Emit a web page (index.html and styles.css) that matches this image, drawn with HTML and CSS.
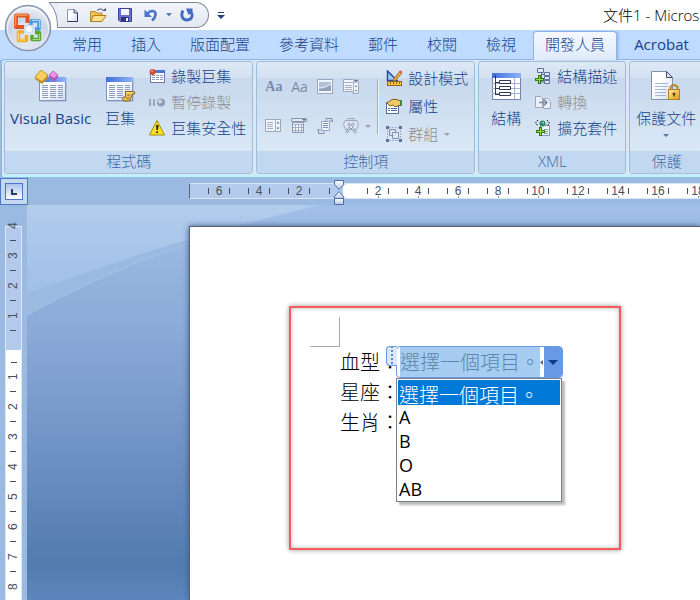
FILE: index.html
```html
<!DOCTYPE html>
<html lang="zh-Hant">
<head>
<meta charset="utf-8">
<title>文件1 - Microsoft Word</title>
<link rel="stylesheet" href="styles.css">
</head>
<body>
<svg class="defs" aria-hidden="true">
  <defs>
    <linearGradient id="gBlue" x1="0" y1="0" x2="1" y2="0"><stop offset="0" stop-color="#3f6fd8"/><stop offset="1" stop-color="#8fb4fa"/></linearGradient>
    <linearGradient id="gPaper" x1="0" y1="0" x2="1" y2="1"><stop offset="0.4" stop-color="#fff"/><stop offset="1" stop-color="#cfd9ee"/></linearGradient>
    <linearGradient id="gGold" x1="0" y1="0" x2="1" y2="1"><stop offset="0" stop-color="#fff0a0"/><stop offset="1" stop-color="#dc9a1c"/></linearGradient>
    <radialGradient id="gOrb" cx="0.5" cy="0.85" r="0.9"><stop offset="0" stop-color="#fff"/><stop offset="0.45" stop-color="#e6ebf3"/><stop offset="0.6" stop-color="#cbd6e6"/><stop offset="1" stop-color="#f4f7fb"/></radialGradient>
    <linearGradient id="gKnob" x1="0" y1="0" x2="0" y2="1"><stop offset="0" stop-color="#fff"/><stop offset="1" stop-color="#b4c8e8"/></linearGradient>
    <g id="sheet">
      <rect x="1" y="1" width="27" height="24" fill="#8797b8" opacity=".35"/>
      <rect x=".5" y=".5" width="26" height="23" fill="url(#gPaper)" stroke="#7f93be"/>
      <rect x="0" y="0" width="27" height="5" fill="url(#gBlue)"/>
      <path d="M3 8.500h6M3 10.500h6M3 12.500h6M3 14.500h6M3 16.500h6M3 18.500h6M3 20.500h6M11 8.500h6M11 10.500h6M11 12.500h6M11 14.500h6M11 16.500h6M11 18.500h6M11 20.500h6M19 8.500h5M19 10.500h5M19 12.500h5M19 14.500h5M19 16.500h5M19 18.500h5M19 20.500h5" stroke="#8c9cc0"/>
    </g>
    <g id="plus"><path d="M3 0h3v3h3v3H6v3H3V6H0V3h3z" fill="#2f7d12"/><path d="M4 1h1v3h3v1H5v3H4V5H1V4h3z" fill="#8fe04a"/></g>
  </defs>
</svg>

<header class="titlebar">
  <button class="office" aria-label="Office 按鈕">
    <svg width="48" height="48" viewBox="0 0 48 48">
      <circle cx="24" cy="24" r="22.500" fill="url(#gOrb)" stroke="#8794ad" stroke-width="1.500"/>
      <circle cx="24" cy="24" r="20.500" fill="none" stroke="#fff" stroke-opacity=".8"/>
      <path d="M3.500 25Q24 16 44.500 25A20.500 20.500 0 0 1 3.500 25z" fill="#c3d0e4" opacity=".5"/>
      <g fill="none" stroke-width="4" stroke-linejoin="round">
        <path d="M20 23H12V11.500H23.500V19" stroke="#e0561c"/>
        <path d="M27 21V17H35V25H31" stroke="#4a9be0" stroke-width="3.500"/>
        <path d="M20 28H14.500V36.500H22.500V31" stroke="#f3ae22" stroke-width="3.500"/>
        <path d="M28 31V35.500H35.500V28.500H31" stroke="#5aa832" stroke-width="3.500"/>
      </g>
      <path d="M11.500 22V11H24" fill="none" stroke="#f39a55" stroke-width="1.500"/>
      <path d="M28 16.500h7.500v7" fill="none" stroke="#a5d3f7"/>
      <path d="M14.500 29v7h7" fill="none" stroke="#fbd97a"/>
      <path d="M28.500 35.500h7v-6" fill="none" stroke="#a9d887"/>
      <circle cx="25" cy="25" r="3" fill="#fff" opacity=".75"/>
    </svg>
  </button>
  <svg class="hook" width="10" height="28" viewBox="0 0 10 28"><path d="M0 2.500C6 9 8.500 16 8.500 27.500H10V2.500z" fill="#e9eef6"/><path d="M0 2.500C6 9 8.500 16 8.500 27.500H10M0 2.500H10" fill="none" stroke="#7f8794"/></svg>
  <nav class="quick" aria-label="快速存取工具列">
    <button aria-label="新增"><svg width="14" height="16" viewBox="0 0 14 16"><path d="M2.500 2.500H9L12.500 6v8.500h-10z" fill="url(#gPaper)" stroke="#8b98b5"/><path d="M9 2.500L12.500 6v8.500h-10" fill="none" stroke="#2c3a58"/><path d="M9 2.500V6h3.500" fill="#dce5f5" stroke="#44506b"/></svg></button>
    <button aria-label="開啟"><svg width="18" height="16" viewBox="0 0 18 16"><path d="M1.500 14V4.500h5l1 1.500H13v8z" fill="#efc04c" stroke="#b98a2c"/><path d="M1.500 14.500l3-6H17l-4 6z" fill="#ffe08a" stroke="#b07a18"/><path d="M8 3.500Q12 0 15 4" fill="none" stroke="#44506b"/><path d="M13 4h4V1z" fill="#44506b"/></svg></button>
    <button aria-label="儲存"><svg width="16" height="16" viewBox="0 0 16 16"><path d="M1.500 1.500h13v13H3l-1.500-1.500z" fill="#6a70d0" stroke="#3c429c"/><rect x="4" y="2" width="8" height="6" fill="#f4f7ff"/><rect x="4" y="10" width="8" height="4" fill="#2e3480"/><rect x="9" y="11" width="2" height="3" fill="#fff"/></svg></button>
    <button aria-label="復原"><svg width="16" height="16" viewBox="0 0 16 16"><path d="M4.500 6.500C8 2.500 13 3.500 12.500 8 12.200 10.500 11 12 9 13.500" fill="none" stroke="#4a74cc" stroke-width="2.600"/><path d="M1.500 2.500v7.500h7.500z" fill="#4a74cc"/></svg></button>
    <button class="narrow" aria-label="復原選項"><svg width="6" height="4" viewBox="0 0 6 4"><path d="M0 0h6L3 3.500z" fill="#5d7fae"/></svg></button>
    <button aria-label="取消復原"><svg width="16" height="16" viewBox="0 0 16 16"><path d="M4 3.500C1.500 8 3 13 8 13S14.500 8 11.500 4.500" fill="none" stroke="#3f6bc6" stroke-width="2.800"/><path d="M13.500 1.500v3L9.500 8 7 1.500z" fill="#3f6bc6"/></svg></button>
  </nav>
  <button class="custom" aria-label="自訂快速存取工具列"><svg width="8" height="9" viewBox="0 0 8 9"><path d="M1 1.500h6" stroke="#25407c"/><path d="M0 4h8L4 8z" fill="#25407c"/></svg></button>
  <h1 class="doc-title">文件1 - Microsoft Word</h1>
</header>

<nav class="tabs">
  <a href="#home">常用</a>
  <a href="#insert">插入</a>
  <a href="#layout">版面配置</a>
  <a href="#references">參考資料</a>
  <a href="#mail">郵件</a>
  <a href="#review">校閱</a>
  <a href="#view">檢視</a>
  <a href="#developer" class="active">開發人員</a>
  <a href="#acrobat" class="latin">Acrobat</a>
</nav>

<section class="ribbon">
  <section class="group code">
    <div class="body">
      <button class="big"><svg width="32" height="32" viewBox="0 0 32 32"><use href="#sheet" x="4" y="7"/><path d="M0 7l6-7 7 5-6 8z" fill="#f7cf62" stroke="#c39131"/><path d="M0 7l7 4 6-6v3l-6 6-7-5z" fill="#c98f20"/><path d="M14 5l4-4 5 4-4 6z" fill="#ef8fe6" stroke="#c46ac4"/><path d="M14 5l5 3 4-3v2l-4 5-5-5z" fill="#b653b4"/></svg><span class="latin">Visual Basic</span></button>
      <button class="big"><svg width="32" height="32" viewBox="0 0 32 32"><use href="#sheet" x="2" y="7"/><path d="M21.500 21.500h8q2 0 1 2.500h-2l-2 4.500q0 2.500-2 2.500h-5q-2-2 0-4h2z" fill="url(#gGold)" stroke="#84601d"/><path d="M23 25h3M22 28h3" stroke="#84601d"/></svg><span>巨集</span></button>
      <div class="stack">
        <button class="small"><svg width="16" height="16" viewBox="0 0 16 16"><rect x="1.500" y="2.500" width="14" height="12" fill="#fff" stroke="#6a7ca3"/><rect x="1" y="2" width="15" height="3" fill="#4c76cf"/><path d="M3 7.500h3M7 7.500h3M11 7.500h3M3 9.500h3M7 9.500h3M11 9.500h3M3 11.500h3M7 11.500h3M11 11.500h3" stroke="#8c9cc0"/><circle cx="3.500" cy="4" r="3" fill="#e0492c"/><circle cx="3" cy="3" r="1" fill="#ffa088"/></svg><span>錄製巨集</span></button>
        <button class="small" disabled><svg width="16" height="16" viewBox="0 0 16 16"><path d="M1 5v7M5 5v7" stroke="#9aa6bd" stroke-width="2"/><circle cx="12" cy="8.500" r="4" fill="#8f9db8"/><circle cx="11" cy="7.500" r="2" fill="#cfd7e6"/></svg><span>暫停錄製</span></button>
        <button class="small"><svg width="16" height="16" viewBox="0 0 16 16"><path d="M8 .5L15.500 15H.5z" fill="#ffe01c" stroke="#a08a10" stroke-linejoin="round"/><path d="M7 5h2.500L9 10H7.500zM7 11.500h2V13H7z" fill="#222"/></svg><span>巨集安全性</span></button>
      </div>
    </div>
    <h2>程式碼</h2>
  </section>

  <section class="group controls">
    <div class="body">
      <div class="grid">
        <button disabled aria-label="RTF"><b class="aa rich">Aa</b></button>
        <button disabled aria-label="純文字"><span class="aa">Aa</span></button>
        <button disabled aria-label="圖片"><svg width="16" height="16" viewBox="0 0 16 16"><rect x=".5" y=".5" width="15" height="14" fill="#f1f4f9" stroke="#9aa7c0"/><rect x="2" y="3" width="12" height="9" fill="#b4c0d4"/><path d="M2 10q5 0 12-4v6H2z" fill="#93a1ba"/><path d="M2 9q5 0 12-4" stroke="#e8edf5" fill="none"/></svg></button>
        <button disabled aria-label="下拉式方塊"><svg width="16" height="16" viewBox="0 0 16 16"><path d="M.5.500h15v14H10v-2H.5z" fill="#f1f4f9" stroke="#9aa7c0"/><path d="M.5 3.500h15M10.500 0v14M2 6.500h7M2 8.500h7M2 10.500h7" stroke="#a5b1c6"/><path d="M10 0h6v4h-6z" fill="#b4c0d4"/><path d="M11 1h4l-2 2zM12 8l1-2 1 2zM12 11h2l-1 2z" fill="#5f6e8b"/></svg></button>
        <button disabled aria-label="清單"><svg width="16" height="16" viewBox="0 0 16 16"><rect x=".5" y="1.500" width="15" height="12" fill="#f1f4f9" stroke="#9aa7c0"/><path d="M10.500 2v11M2 4.500h6M2 6.500h6M2 8.500h6M2 10.500h6" stroke="#a5b1c6"/><path d="M11.500 5.500l1.500-2 1.500 2zM11.500 9.500h3l-1.500 2z" fill="#5f6e8b"/></svg></button>
        <button disabled aria-label="日期選擇器"><svg width="16" height="16" viewBox="0 0 16 16"><path d="M.5.500h15v3H.5z" fill="#dfe5ef" stroke="#8b98b2"/><path d="M11 1h4l-2 2z" fill="#5f6e8b"/><path d="M1.500 4.500h11v10h-11z" fill="#f1f4f9" stroke="#8b98b2"/><path d="M2 6.500h10M2 9.500h10M2 12.500h10M4.500 7v7M7.500 7v7M10.500 7v7" stroke="#a5b1c6"/></svg></button>
        <button disabled aria-label="建置組塊"><svg width="16" height="16" viewBox="0 0 16 16"><path d="M4.500 3.500h8v9h-8z" fill="#eef2f8" stroke="#9aa7c0"/><path d="M6 5.500h5M6 7.500h5M6 9.500h5M9 3V.500h6v3M13 2l2 2 1-2M7 13v2.500H1.500v-3M.5 13l1-2 2 2" fill="none" stroke="#8191b0"/></svg></button>
        <button disabled aria-label="舊表單"><svg width="16" height="16" viewBox="0 0 16 16"><path d="M5 3V.500h6V3" fill="none" stroke="#9aa7c0"/><path d="M2 2.500h12l1.500 4-2 5h-11l-2-5z" fill="#dde4ef" stroke="#9aa7c0"/><path d="M5 5l8 10M11 5l-8 10" stroke="#8292b0" stroke-width="2.500"/><path d="M5 5l8 10M11 5l-8 10" stroke="#f1f4f9"/></svg><i class="caret"></i></button>
      </div>
      <div class="stack wide">
        <button class="small"><svg width="16" height="16" viewBox="0 0 16 16"><path d="M1.500 1v9.500H11z" fill="#a8c8f8" stroke="#1f4ea8" stroke-width="1.500"/><path d="M7 10l7-9 2 2-7 8z" fill="#f2ad3c" stroke="#a06d24"/><path d="M14 1l2 2" stroke="#d9534a" stroke-width="2"/><rect x="1.500" y="11.500" width="14" height="4" fill="#f5c64a" stroke="#94650f"/><path d="M4.500 12v2M7.500 12v2M10.500 12v2M13.500 12v2" stroke="#94650f"/></svg><span>設計模式</span></button>
        <button class="small"><svg width="16" height="16" viewBox="0 0 16 16"><rect x=".5" y="4.500" width="12" height="11" fill="#fff" stroke="#5b6c8f"/><path d="M2 10.500h2M5 10.500h6M2 12.500h2M5 12.500h6" stroke="#4c6fb5"/><path d="M1 5l5-3.500h5l2 1h3v5h-3L9 9 7 7 4 8z" fill="#f0c868" stroke="#7c6224"/><path d="M14 2h2v5h-2z" fill="#3e8a46"/></svg><span>屬性</span></button>
        <button class="small" disabled><svg width="16" height="16" viewBox="0 0 16 16"><path d="M3 1.500h10M3 14.500h10M1.500 4v8M14.500 4v8" stroke="#a5b1c8" stroke-dasharray="2 1"/><path d="M3.500 3.500h6v6h-6z" fill="#d7e0ee" stroke="#8391ad"/><path d="M6.500 6.500h6v6h-6z" fill="#edf1f7" fill-opacity=".7" stroke="#8391ad"/><path d="M0 0h3v3H0zM13 0h3v3h-3zM0 13h3v3H0zM13 13h3v3h-3z" fill="#61729a"/></svg><span>群組</span><i class="caret"></i></button>
      </div>
    </div>
    <h2>控制項</h2>
  </section>

  <section class="group xml">
    <div class="body">
      <button class="big"><svg width="32" height="32" viewBox="0 0 32 32"><rect x="2.500" y="3.500" width="28" height="26" fill="#fff" stroke="#7384aa"/><path d="M2 3h29v5H2z" fill="url(#gBlue)"/><path d="M2 13.500h28M2 18.500h28M2 23.500h28M24.500 8v21" stroke="#a3b3d3"/><path d="M5.500 5v20M5.500 12.500H10M5.500 18.500H10M5.500 24.500H10" stroke="#2e3a57" fill="none"/><path d="M9.500 10.500h11v3h-11zM9.500 16.500h11v3h-11zM9.500 22.500h11v3h-11z" fill="#fff" stroke="#2e3a57"/></svg><span>結構</span></button>
      <div class="stack">
        <button class="small"><svg width="16" height="16" viewBox="0 0 16 16"><path d="M2.500.500h6v4h-6zM9.500 4.500h5v3h-5zM9.500 8.500h5v3h-5zM9.500 12.500h5v3h-5z" fill="#e2eaf8" stroke="#5b6f9b"/><path d="M6.500 5v9H9M6.500 6.500H9M6.500 10.500H9" fill="none" stroke="#5b6f9b"/><use href="#plus" x="0" y="7"/></svg><span>結構描述</span></button>
        <button class="small" disabled><svg width="16" height="16" viewBox="0 0 16 16"><path d="M.5 2.500h5l2 2v9h-7zM8.500 4.500h4l3 3v7h-7z" fill="#edf1f7" stroke="#9aa7bd"/><path d="M4 8.500h8M9 5.500l3 3-3 3" fill="none" stroke="#7d8ba5" stroke-width="1.500"/></svg><span>轉換</span></button>
        <button class="small"><svg width="16" height="16" viewBox="0 0 16 16"><path d="M5.500 5.500h9v10h-9z" fill="#eef3fb" stroke="#8494b6"/><path d="M9 9.500h4M9 11.500h4M9 13.500h4" stroke="#8c9cc0"/><circle cx="7.500" cy="3.500" r="3" fill="#2e8a63"/><path d="M6 2h3v2z" fill="#8ad0f4"/><path d="M3 0L.5 3 3 6M12 0l2.500 3L12 6" fill="none" stroke="#111" stroke-dasharray="1.500 1"/><use href="#plus" x="1" y="7"/></svg><span>擴充套件</span></button>
      </div>
    </div>
    <h2>XML</h2>
  </section>

  <section class="group protect">
    <div class="body">
      <button class="big"><svg width="32" height="32" viewBox="0 0 32 32"><path d="M1.500 1.500h15l6 6v22h-21z" fill="url(#gPaper)" stroke="#8592ae"/><path d="M16.500 1.500v6h6z" fill="#dbe4f4" stroke="#44506b"/><path d="M5 13.500h13M5 16.500h13M5 19.500h11M5 22.500h11M5 25.500h11" stroke="#a3b5d6"/><path d="M20.500 20v-3q3.500-4 7 0v3" fill="none" stroke="#b78a26" stroke-width="2"/><rect x="18.500" y="19.500" width="11" height="10" fill="url(#gGold)" stroke="#b87c18"/><path d="M24 22.500v4M22.500 24h3" stroke="#5c3c08" stroke-width="1.500"/></svg><span>保護文件</span><i class="caret"></i></button>
    </div>
    <h2>保護</h2>
  </section>
</section>

<div class="ruler-row">
  <button class="tabstop" aria-label="定位點"><span><svg width="6" height="6" viewBox="0 0 6 6"><path d="M0 0h2v4h4v2H0z" fill="#28425f"/></svg></span></button>
  <div class="hruler">
    <div class="margin"><span>6</span><span>4</span><span>2</span></div>
    <div class="scale"><span>2</span><span>4</span><span>6</span><span>8</span><span>10</span><span>12</span><span>14</span><span>16</span><span>18</span></div>
    <svg class="indent" width="10" height="26" viewBox="0 0 10 26"><path d="M.5.500h9v4L5 9.500.5 4.500z" fill="url(#gKnob)" stroke="#4a6fa8"/><path d="M5 11.500l4.500 5v2h-9v-2z" fill="url(#gKnob)" stroke="#4a6fa8"/><path d="M.5 18.500h9v6h-9z" fill="url(#gKnob)" stroke="#4a6fa8"/></svg>
  </div>
</div>

<main class="work">
  <div class="vgutter">
    <div class="vruler">
      <div class="vmargin"><span>4</span><span>3</span><span>2</span><span>1</span></div>
      <div class="vscale"><span>1</span><span>2</span><span>3</span><span>4</span><span>5</span><span>6</span><span>7</span><span>8</span></div>
    </div>
  </div>
  <div class="desk">
    <svg class="swoosh" width="420" height="130" viewBox="0 0 420 130" aria-hidden="true">
      <defs><linearGradient id="gSky" x1="0" y1="0" x2="0" y2="1"><stop offset="0" stop-color="#b2cdec"/><stop offset="1" stop-color="#a0bfe8"/></linearGradient></defs>
      <path d="M0 0H294Q130 38 0 110z" fill="#9bbadf"/>
      <path d="M0 0H294Q150 32 0 89z" fill="url(#gSky)"/>
      <path d="M294 0Q130 38 0 110" fill="none" stroke="#a5c2e8"/>
    </svg>
    <article class="page">
      <div class="frame">
        <i class="corner"></i>
        <div class="fields">
          <p>血型：
            <span class="control">
              <i class="grip"></i>
              <button class="value" aria-label="血型"><span class="chosen">選擇一個項目。</span><span class="pilcrow"><svg width="4" height="5" viewBox="0 0 4 5"><path d="M0 2.500L3 0v5z" fill="#667"/></svg></span><span class="drop"><i class="caret"></i></span></button>
              <select class="list" size="5" aria-label="血型選項">
                <option selected>選擇一個項目。</option>
                <option>A</option>
                <option>B</option>
                <option>O</option>
                <option>AB</option>
              </select>
            </span>
          </p>
          <p>星座：</p>
          <p>生肖：</p>
        </div>
      </div>
    </article>
  </div>
</main>
</body>
</html>
```

FILE: styles.css
```css
* { box-sizing: border-box; }

body {
  margin: 0;
  height: 100vh;
  display: flex;
  flex-direction: column;
  overflow: hidden;
  background: #9bbae2;
  color: #15428b;
  font: 300 15px/20px "Open Sans", "Noto Sans CJK TC", sans-serif;
}

button {
  margin: 0;
  padding: 0;
  border: 0;
  background: none;
  color: inherit;
  font: inherit;
}

svg { display: block; flex: none; }
.defs { position: absolute; width: 0; height: 0; }
h1, h2, p { margin: 0; font: inherit; }
.latin { font-weight: 400; }

.caret {
  border: 3px solid transparent;
  border-top-color: currentColor;
  border-bottom: 0;
}

/* Title bar */
.titlebar {
  position: relative;
  flex: none;
  display: flex;
  height: 30px;
  padding-left: 49px;
  background: #fff;
  white-space: nowrap;
}

.office {
  position: absolute;
  left: 4px;
  top: 4px;
  z-index: 2;
}

.quick {
  display: flex;
  align-items: center;
  gap: 10px;
  height: 26px;
  margin-top: 2px;
  padding: 0 13px 0 6px;
  border: 1px solid #7f8794;
  border-left: 0;
  border-radius: 0 13px 13px 0;
  background: linear-gradient(#f1f4f9, #e3e9f2);
}

.quick .narrow { margin: 0 -3px; }
.custom { margin-left: 8px; }

.doc-title {
  flex: 1;
  min-width: 0;
  margin-left: 378px;
  padding-top: 5px;
  color: #000;
  overflow: hidden;
}

/* Tabs */
.tabs {
  flex: none;
  display: flex;
  gap: 5px;
  height: 30px;
  padding-left: 60px;
  background: #bfdbff;
  white-space: nowrap;
}

.tabs a {
  margin-top: 1px;
  padding: 2px 11px;
  border: 1px solid transparent;
  border-bottom: 0;
  color: inherit;
  text-decoration: none;
}

.tabs .active {
  z-index: 1;
  border-color: #8db2e3;
  border-radius: 4px 4px 0 0;
  background: linear-gradient(#f5f9ff, #dfeafa);
  box-shadow: 2px 0 2px #9ebfe8;
}

/* Ribbon */
.ribbon {
  flex: none;
  display: flex;
  gap: 3px;
  height: 118px;
  margin: -1px 0 0 1px;
  padding: 1px 2px 1px;
  border: 1px solid #8db2e3;
  border-bottom: 2px solid #b9f4fd;
  border-right: 0;
  border-radius: 4px 0 0 4px;
  background: #d9e7f7;
  white-space: nowrap;
  overflow: hidden;
}

.group {
  flex: none;
  display: flex;
  flex-direction: column;
  border: 1px solid #9dbfdb;
  border-radius: 3px;
  background: linear-gradient(#dde8f5, #d3e1f1 14%, #c8d8ed 15%, #dae8f5 80%);
  overflow: hidden;
}

.code { min-width: 249px; }
.controls { min-width: 219px; }
.xml { min-width: 148px; }
.protect { min-width: 75px; }

.group h2 {
  flex: none;
  height: 22px;
  background: #c1d8f0;
  color: #3e6aaa;
  line-height: 20px;
  text-align: center;
}

.body {
  flex: 1;
  display: flex;
  align-items: flex-start;
  padding: 0 6px;
}

.big {
  display: flex;
  flex-direction: column;
  align-items: center;
  gap: 6px;
  padding-top: 8px;
}

.big .caret { color: #5577a8; }
.code .body { gap: 13px; padding-left: 5px; }
.xml .body { gap: 13px; padding-left: 11px; }

.stack {
  display: flex;
  flex-direction: column;
  gap: 6px;
  padding-top: 4px;
}

.wide { gap: 8px; padding-top: 6px; }

.small {
  display: flex;
  align-items: center;
  gap: 6px;
  height: 20px;
}

.small:disabled { color: #8d8d8d; }

.grid {
  display: grid;
  grid-template-columns: repeat(4, 16px);
  grid-auto-rows: 16px;
  gap: 23px 10px;
  margin: 17px 8px 0 0;
  padding: 0 18px 0 2px;
  border-right: 1px solid #8fb0d4;
  box-shadow: 1px 0 #f0f6fc;
}

.grid button { display: flex; align-items: center; gap: 6px; }
.aa { color: #7c8baa; font: 400 14px/16px "Open Sans", sans-serif; }
.rich { font: 700 14px/16px "Liberation Serif", serif; }
.grid .caret, .small .caret { color: #a2a2a2; }

/* Horizontal ruler */
.ruler-row {
  flex: none;
  display: flex;
  height: 28px;
  color: #474f60;
  font: 400 12px/13px "Liberation Sans", sans-serif;
}

.tabstop {
  flex: none;
  width: 28px;
  height: 27px;
  margin-top: 1px;
  padding: 4px;
  border: 1px solid #4c76c8;
  background: #c6d8ef;
}

.tabstop span {
  display: flex;
  align-items: center;
  justify-content: center;
  height: 17px;
  border: 1px solid #4c76c8;
  background: linear-gradient(#a9c4ea, #fff);
}

.hruler {
  position: relative;
  z-index: 1;
  flex: 1;
  display: flex;
  min-width: 0;
  height: 16px;
  margin: 6px 0 0 161px;
  border: 1px solid #d9e6f7;
  border-left-color: #5a6478;
  border-right: 0;
}

.margin {
  flex: none;
  display: flex;
  width: 153px;
  padding-left: 9px;
  background: #b3caec;
}

.scale {
  flex: 1;
  display: flex;
  min-width: 0;
  padding-left: 6px;
  border-radius: 4px 0 0 4px;
  background: #fff;
  overflow: hidden;
}

.scale::before, .margin::after,
.hruler span::before, .hruler span::after {
  content: "";
  align-self: center;
  width: 1px;
  height: 6px;
  background: #474f60;
}

.scale::before { margin-right: 9px; }
.margin::after { margin-left: 10px; }

.hruler span {
  flex: none;
  display: flex;
  align-items: center;
  justify-content: space-between;
  width: 40px;
  padding: 0 9px;
}

.scale span {
  background: linear-gradient(#8c93a0, #8c93a0) center bottom / 1px 2px no-repeat;
}

.indent { position: absolute; left: 144px; top: -4px; }

/* Document area */
.work { flex: 1; display: flex; min-height: 0; }

.vgutter {
  flex: none;
  width: 27px;
  padding: 21px 5px 0;
  color: #474f60;
  font: 400 12px/13px "Liberation Sans", sans-serif;
  overflow: hidden;
}

.vruler {
  width: 17px;
  border: 1px solid #dce8f8;
  border-bottom: 0;
}

.vmargin { height: 123px; background: #b3caec; }
.vmargin span:first-child { margin-top: -16px; }
.vscale { padding-top: 12px; background: #fff; }
.vmargin, .vscale { display: flex; flex-direction: column; align-items: center; }

.vscale::before {
  content: "";
  flex: none;
  width: 6px;
  height: 1px;
  margin-bottom: -1px;
  background: #474f60;
}

.vruler span {
  flex: none;
  display: flex;
  align-items: center;
  justify-content: center;
  width: 15px;
  height: 30px;
  writing-mode: vertical-rl;
  rotate: 180deg;
  background: linear-gradient(#474f60, #474f60) center top / 6px 1px no-repeat;
}

.desk {
  position: relative;
  flex: 1;
  min-width: 0;
  padding: 21px 0 0 162px;
  background: linear-gradient(#a1bfe8, #88a9d6 34%, #6f92c4 62%, #537bae 91%, #5c86bd);
  overflow: hidden;
}

.swoosh { position: absolute; left: 0; top: 0; }

.page {
  position: relative;
  height: 100%;
  padding: 79px 0 0 99px;
  border: 1px solid #5f6168;
  border-width: 1px 0 0 1px;
  background: #fff;
  box-shadow: 0 0 6px #3c5a8a;
}

.frame {
  width: max-content;
  min-width: 332px;
  min-height: 244px;
  padding: 9px 19px;
  border: 2px solid #fa5a5a;
  box-shadow: 0 0 5px #999, inset 0 0 5px #bbb;
}

.corner {
  display: block;
  width: 30px;
  height: 30px;
  border: 1px solid #aaa;
  border-width: 0 1px 1px 0;
}

.fields {
  padding: 1px 0 0 30px;
  color: #000;
  font-size: 20px;
  line-height: 30px;
}

.fields p { position: relative; height: 30px; }

.control {
  position: absolute;
  left: 46px;
  top: -2px;
  z-index: 1;
  padding-left: 10px;
}

.grip {
  position: absolute;
  left: 0;
  top: 0;
  width: 11px;
  height: 20px;
  border: 1px solid #6899e4;
  border-right: 0;
  border-radius: 4px 0 0 4px;
  background: radial-gradient(circle, #5b8bd8 1px, transparent 1px) 3px 2px / 4px 4px repeat-y, #dbe7fb;
}

.value {
  display: flex;
  height: 32px;
  border: 1px solid #6899e4;
  border-radius: 4px;
  background: #fff;
  overflow: hidden;
}

.chosen {
  margin-left: 3px;
  background: #a6cdf1;
  color: #5c86ad;
  line-height: 32px;
}

.pilcrow { align-self: center; }

.drop {
  display: flex;
  align-items: center;
  justify-content: center;
  width: 18px;
  background: #6899e4;
  color: #0d3a8a;
}

.drop .caret { border-width: 5px 5px 0; }

.list {
  position: absolute;
  left: 10px;
  top: 32px;
  width: 166px;
  height: 124px;
  padding: 1px;
  border: 1px solid #7a7f8a;
  border-radius: 0;
  background: #fff;
  box-shadow: 3px 3px 2px #bbb;
  outline: 0;
  overflow: hidden;
  scrollbar-width: none;
  font: 400 18px/22px "Open Sans", "Noto Sans CJK TC", sans-serif;
}

.list option {
  height: 24px;
  min-height: 0;
  padding: 0 1px;
  color: #000;
  line-height: 22px;
}

.list option:checked {
  height: 25px;
  background: linear-gradient(#0078d7, #0078d7);
  color: #fff;
  font-weight: 300;
  font-size: 20px;
  -webkit-text-fill-color: #fff;
}
```
